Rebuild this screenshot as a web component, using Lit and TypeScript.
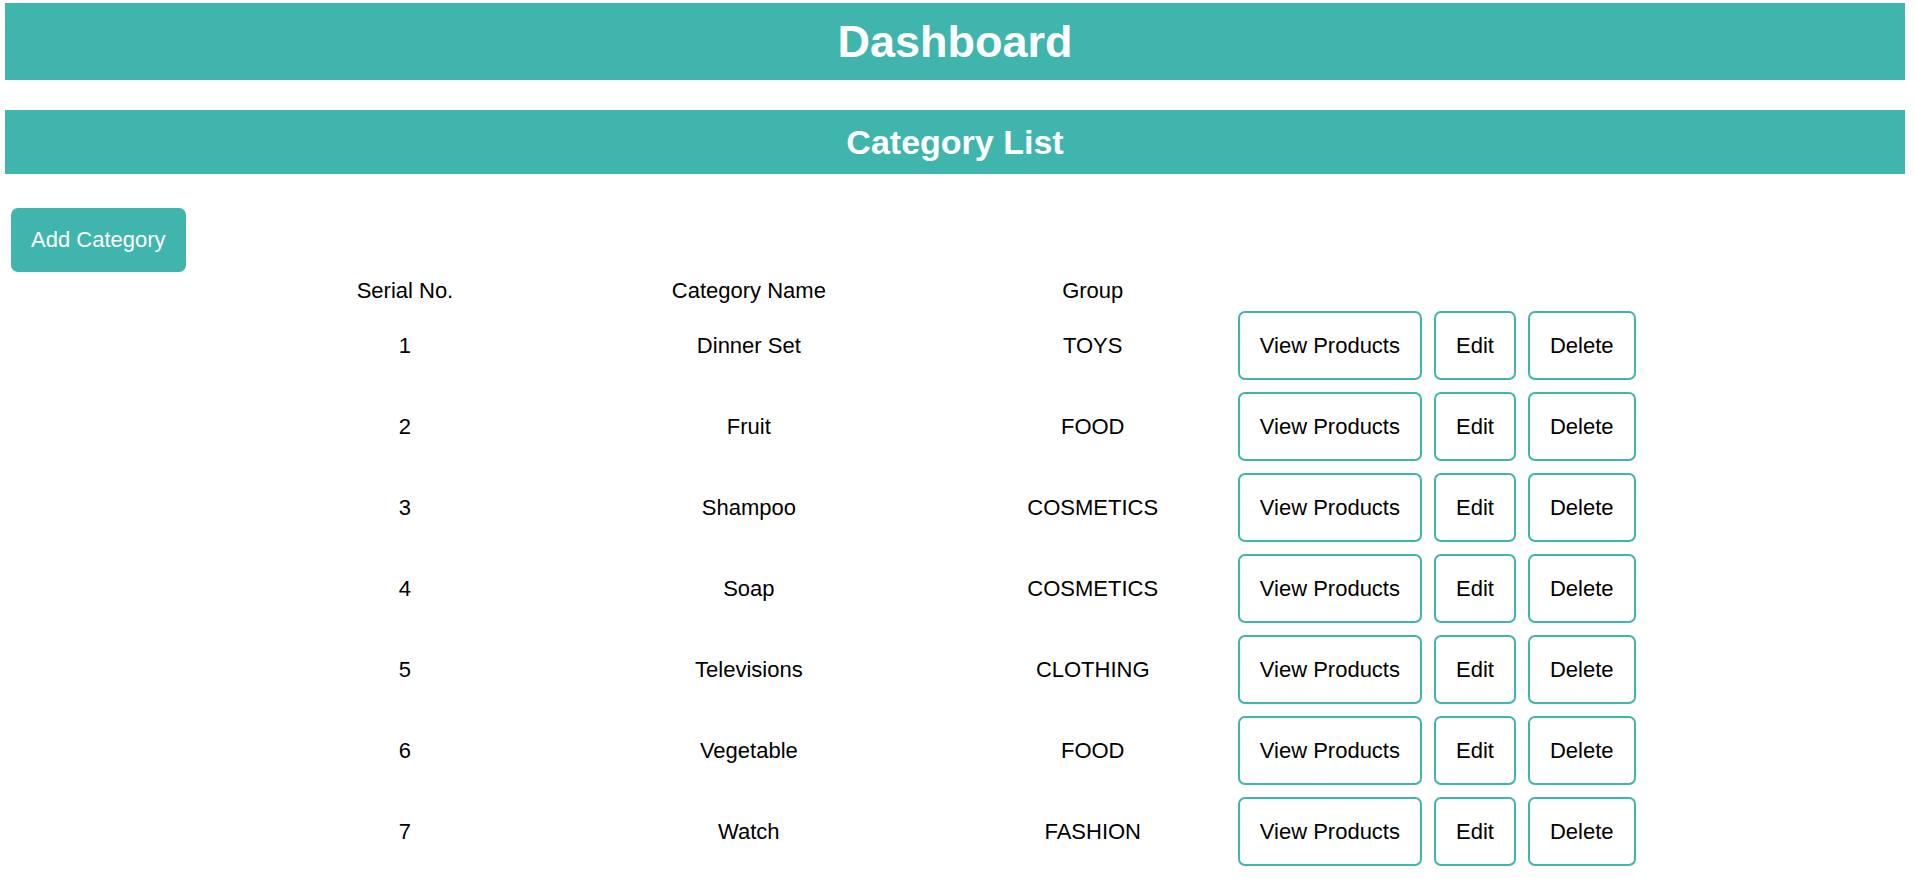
import { LitElement, html, css } from "lit";
import { customElement, state } from "lit/decorators.js";

interface Category {
  name: string;
  group: string;
}

@customElement("app-root")
export class AppRoot extends LitElement {
  static styles = css`
    :host {
      display: block;
      padding: 3px 10px 3px 5px;
      background: #fff;
      color: #000;
      font-family: "Liberation Sans", Arial, sans-serif;
      font-size: 22px;
      line-height: 24px;
    }
    .banner {
      margin: 0 0 30px;
      padding: 12px;
      background: #40b5ad;
      color: #fff;
      text-align: center;
      font-weight: bold;
    }
    .title {
      font-size: 45px;
      line-height: 53px;
    }
    .subtitle {
      font-size: 34px;
      line-height: 40px;
      margin-bottom: 34px;
    }
    button {
      font: inherit;
      color: inherit;
      margin: 0;
      padding: 20px;
      border: 2px solid #40b5ad;
      border-radius: 7px;
      background: #fff;
      line-height: 25px;
      white-space: nowrap;
      cursor: pointer;
    }
    .add {
      display: block;
      margin-left: 6px;
      border: none;
      background: #40b5ad;
      color: #fff;
      line-height: 24px;
    }
    .list {
      width: 72.4%;
      margin-left: 12%;
      table-layout: fixed;
      border-collapse: collapse;
      text-align: center;
    }
    th {
      padding: 7px 0 2px;
      font-weight: normal;
    }
    td {
      padding: 6px 0;
      vertical-align: middle;
    }
    .actions {
      display: flex;
      justify-content: center;
      gap: 12px;
    }
  `;

  @state() private categories: Category[] = [
    { name: "Dinner Set", group: "TOYS" },
    { name: "Fruit", group: "FOOD" },
    { name: "Shampoo", group: "COSMETICS" },
    { name: "Soap", group: "COSMETICS" },
    { name: "Televisions", group: "CLOTHING" },
    { name: "Vegetable", group: "FOOD" },
    { name: "Watch", group: "FASHION" },
  ];

  render() {
    return html`
      <h1 class="banner title">Dashboard</h1>
      <main>
        <h2 class="banner subtitle">Category List</h2>
        <button class="add" type="button">Add Category</button>
        <table class="list">
          <thead>
            <tr>
              <th scope="col">Serial No.</th>
              <th scope="col">Category Name</th>
              <th scope="col">Group</th>
              <th></th>
            </tr>
          </thead>
          <tbody>
            ${this.categories.map(
              (category, index) => html`
                <tr>
                  <td>${index + 1}</td>
                  <td>${category.name}</td>
                  <td>${category.group}</td>
                  <td>
                    <div class="actions">
                      <button type="button">View Products</button>
                      <button type="button">Edit</button>
                      <button type="button">Delete</button>
                    </div>
                  </td>
                </tr>
              `
            )}
          </tbody>
        </table>
      </main>
    `;
  }
}
